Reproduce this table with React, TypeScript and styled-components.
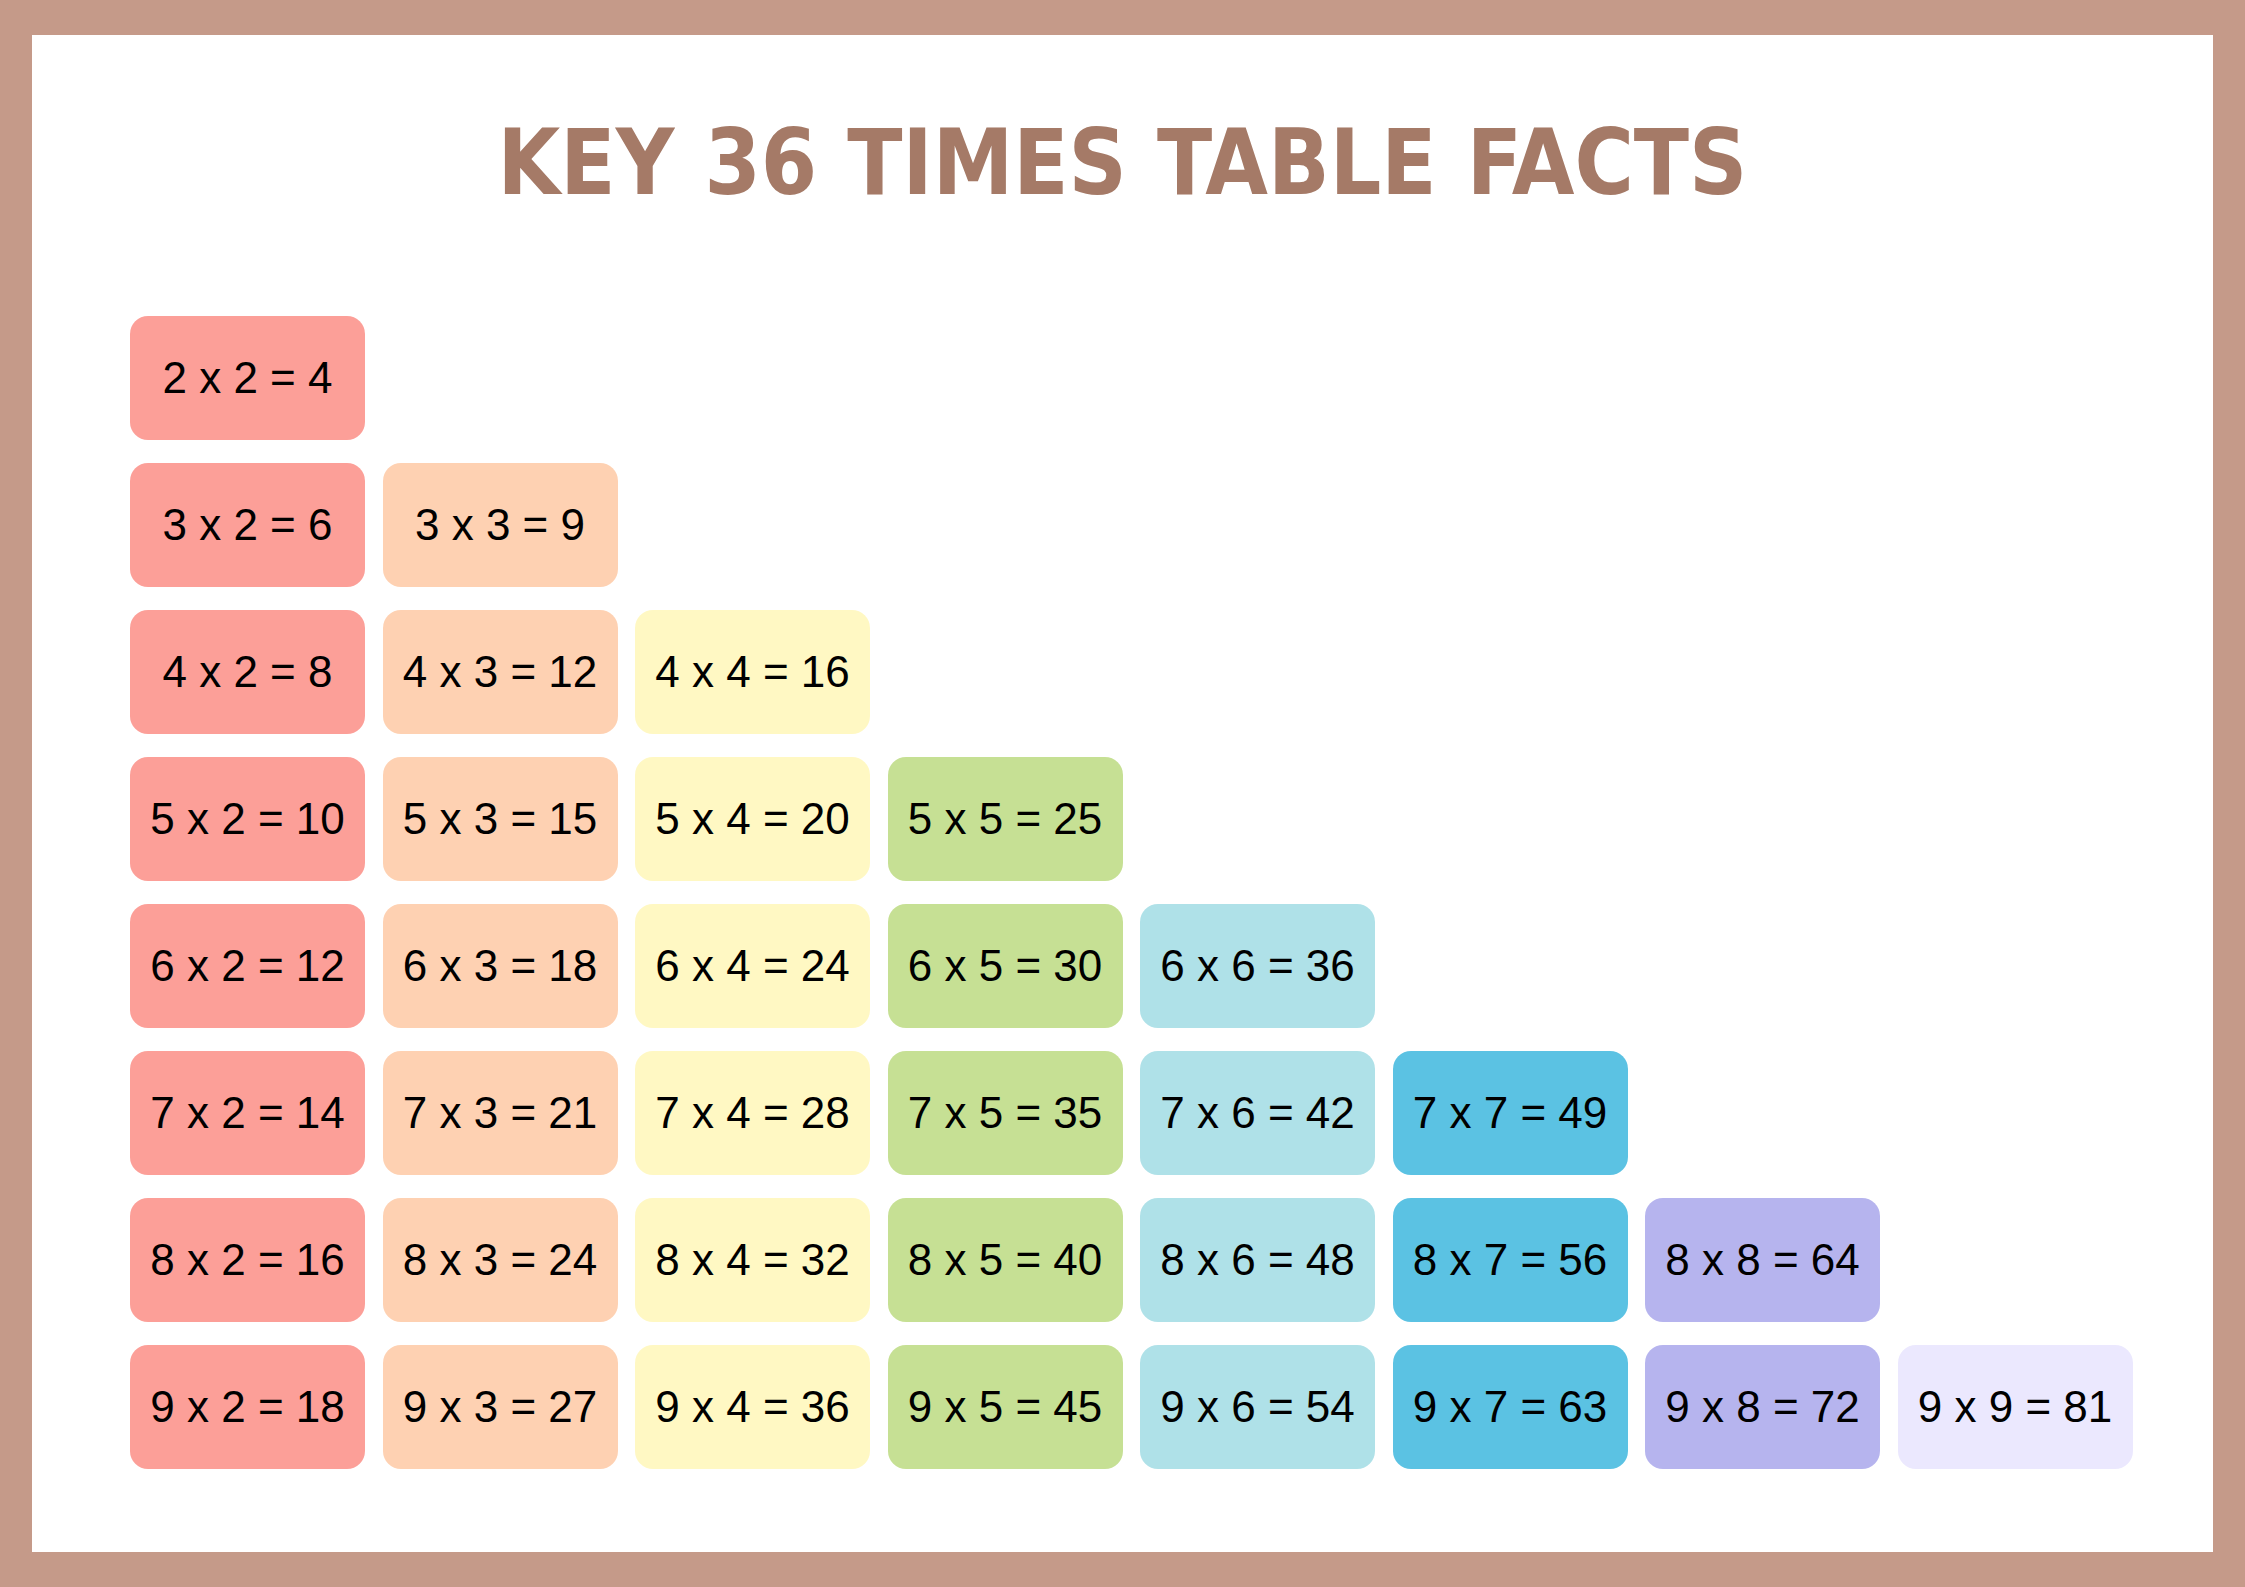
import React from 'react';
import styled, { createGlobalStyle } from 'styled-components';

const GlobalStyle = createGlobalStyle`
  html, body {
    margin: 0;
    padding: 0;
    background: #c59a89;
  }
`;

// one colour per column of the triangle, left to right
const columnColours = [
  '#fc9f98',
  '#fed1b2',
  '#fff8c3',
  '#c6e094',
  '#afe1e8',
  '#5bc2e3',
  '#b6b4ee',
  '#ebe8fe',
];

const Frame = styled.div`
  box-sizing: border-box;
  width: 2245px;
  height: 1587px;
  padding: 35px 32px;
  background: #c59a89;
`;

const Sheet = styled.main`
  box-sizing: border-box;
  height: 100%;
  background: #ffffff;
  padding: 0 0 0 98px;
  display: flex;
  flex-direction: column;
`;

const Title = styled.h1`
  margin: 83px 98px 0 0;
  height: 198px;
  font-family: 'DejaVu Sans Condensed', 'DejaVu Sans', sans-serif;
  font-stretch: condensed;
  font-weight: 700;
  font-size: 90px;
  line-height: 1;
  letter-spacing: 0;
  word-spacing: 2px;
  color: #a57a67;
  text-align: center;
  text-transform: uppercase;
`;

const FactGrid = styled.div`
  display: grid;
  grid-template-columns: repeat(8, 235px);
  grid-auto-rows: 124px;
  column-gap: 17.5px;
  row-gap: 23px;
`;

const Fact = styled.div<{ $col: number; $row: number; $bg: string }>`
  grid-column: ${p => p.$col};
  grid-row: ${p => p.$row};
  background: ${p => p.$bg};
  border-radius: 18px;
  display: flex;
  align-items: center;
  justify-content: center;
  font-family: 'Liberation Sans', Arial, sans-serif;
  font-size: 44px;
  color: #000000;
  white-space: nowrap;
`;

const facts: { a: number; b: number }[] = [];
for (let a = 2; a <= 9; a++) {
  for (let b = 2; b <= a; b++) {
    facts.push({ a, b });
  }
}

export default function App() {
  return (
    <>
      <GlobalStyle />
      <Frame>
        <Sheet>
          <Title>Key 36 Times Table Facts</Title>
          <FactGrid>
            {facts.map(({ a, b }) => (
              <Fact key={`${a}-${b}`} $row={a - 1} $col={b - 1} $bg={columnColours[b - 2]}>
                {a} x {b} = {a * b}
              </Fact>
            ))}
          </FactGrid>
        </Sheet>
      </Frame>
    </>
  );
}
